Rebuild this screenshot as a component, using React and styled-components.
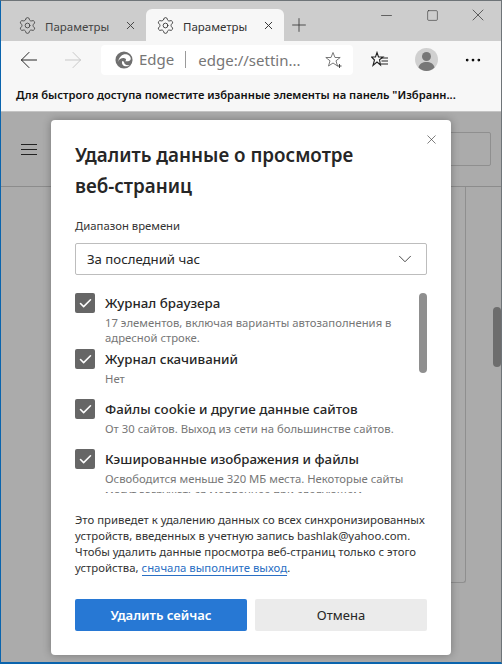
import styled, { createGlobalStyle } from 'styled-components';
import { Settings, X, Plus, ArrowLeft, ArrowRight, Minus, Square, ChevronDown, Check, MoreHorizontal } from 'lucide-react';

const Global = createGlobalStyle`
  html, body { margin: 0; padding: 0; }
  body { font-family: "Noto Sans", "Open Sans", sans-serif; background: #aaa; }
  * { box-sizing: border-box; }
`;

const Win = styled.div`
  position: relative;
  width: 502px;
  height: 664px;
  overflow: hidden;
  display: flex;
  flex-direction: column;
  border-top: 1px solid #6e7478;
  border-left: 1px solid #0a64ad;
  border-right: 1px solid #6e7478;
  border-bottom: 2px solid #0a64ad;
`;

const TabStrip = styled.div`
  height: 40px;
  flex: none;
  background: #cdcdcd;
  display: flex;
  align-items: flex-end;
  padding-left: 7px;
`;

const Tab = styled.div`
  width: 138px;
  height: 32px;
  display: flex;
  align-items: center;
  padding: 0 9px 0 10px;
  gap: 8px;
  font-size: 11.5px;
  color: ${({ $active }) => ($active ? '#333' : '#444')};
  background: ${({ $active }) => ($active ? '#f7f7f7' : 'transparent')};
  border-radius: 6px 6px 0 0;
  svg { flex: none; }
`;

const TabLabel = styled.span`
  flex: 1;
  white-space: nowrap;
  position: relative;
  top: 1px;
`;

const NewTab = styled.div`
  width: 30px;
  height: 32px;
  display: flex;
  align-items: center;
  justify-content: center;
  color: #333;
`;

const WinControls = styled.div`
  margin-left: auto;
  align-self: flex-start;
  display: flex;
  color: #222;
`;

const WinBtn = styled.div`
  width: 46px;
  height: 28px;
  display: flex;
  align-items: center;
  justify-content: center;
`;

const Toolbar = styled.div`
  height: 37px;
  flex: none;
  background: #f7f7f7;
  display: flex;
  align-items: center;
  padding-left: 6px;
`;

const NavBtn = styled.div`
  width: 44px;
  display: flex;
  justify-content: center;
  color: ${({ $off }) => ($off ? '#c6c6c6' : '#222')};
`;

const Address = styled.div`
  margin-left: 6px;
  width: 252px;
  height: 30px;
  background: #fff;
  border-radius: 4px;
  display: flex;
  align-items: center;
  padding: 0 10px 0 14px;
  font-size: 15px;
  color: #767676;
`;

const EdgeName = styled.span`
  margin-left: 6px;
  padding-right: 11px;
  border-right: 1px solid #9a9a9a;
  line-height: 17px;
`;

const Url = styled.span`
  flex: 1;
  margin-left: 12px;
  white-space: nowrap;
`;

const ToolIcons = styled.div`
  display: flex;
  flex: 1;
  align-items: center;
  justify-content: space-between;
  padding: 0 18px 0 18px;
`;

const FavBar = styled.div`
  height: 34px;
  flex: none;
  background: #f7f7f7;
  display: flex;
  align-items: center;
  padding-left: 15px;
  font-size: 11.2px;
  font-weight: 600;
  color: #111;
  white-space: nowrap;
  border-bottom: 1px solid #c4c4c4;
`;

const Page = styled.div`
  flex: 1;
  background: #ababab;
  display: flex;
  flex-direction: column;
`;

const PageHead = styled.div`
  height: 75px;
  flex: none;
  border-bottom: 1px solid #8c8c8c;
  display: flex;
  align-items: center;
  justify-content: space-between;
  padding: 0 10px 0 20px;
  color: #222;
`;

const SearchBox = styled.div`
  width: 120px;
  height: 34px;
  border: 1px solid #8f8f8f;
  border-radius: 2px;
`;

const PageBody = styled.div`
  flex: 1;
  display: flex;
  justify-content: flex-end;
`;

const PageCard = styled.div`
  width: 300px;
  height: 396px;
  border-right: 1px solid #8f8f8f;
  border-bottom: 1px solid #8f8f8f;
  border-radius: 0 0 3px 0;
  margin-right: 35px;
`;

const PageThumb = styled.div`
  position: absolute;
  right: 0;
  top: 306px;
  width: 8px;
  height: 60px;
  border-radius: 4px;
  background: #6d6d6d;
`;

const Modal = styled.div`
  position: absolute;
  left: 50px;
  top: 119px;
  width: 400px;
  height: 535px;
  background: #fff;
  border-radius: 4px;
  box-shadow: 0 0 8px rgba(0, 0, 0, 0.3);
  padding: 20px 24px 24px;
  display: flex;
  flex-direction: column;
`;

const CloseBtn = styled.div`
  position: absolute;
  top: 12px;
  right: 12px;
  color: #333;
  display: flex;
`;

const Title = styled.h2`
  margin: 0;
  font-size: 18.8px;
  line-height: 31px;
  font-weight: 600;
  color: #262626;
  width: 310px;
`;

const FieldLabel = styled.div`
  margin-top: 16px;
  font-size: 11.3px;
  line-height: 16px;
  color: #333;
`;

const Select = styled.div`
  margin-top: 9px;
  height: 32px;
  flex: none;
  border: 1px solid #bdbdbd;
  border-radius: 2px;
  display: flex;
  align-items: center;
  justify-content: space-between;
  padding: 0 10px 0 11px;
  font-size: 13.2px;
  color: #262626;
`;

const ListWrap = styled.div`
  margin-top: 18px;
  height: 200px;
  flex: none;
  overflow: hidden;
  position: relative;
`;

const Thumb = styled.div`
  position: absolute;
  right: 0;
  top: 0;
  width: 8px;
  height: 80px;
  border-radius: 4px;
  background: #8f8f8f;
`;

const Item = styled.div`
  display: flex;
  gap: 10px;
  height: ${({ $h }) => $h}px;
`;

const Box = styled.div`
  width: 20px;
  height: 20px;
  flex: none;
  background: #666;
  border-radius: 2px;
  color: #fff;
  display: flex;
  align-items: center;
  justify-content: center;
`;

const ItemText = styled.div`
  width: 300px;
`;

const ItemTitle = styled.div`
  font-size: 13.3px;
  line-height: 20px;
  font-weight: 500;
  color: #262626;
`;

const ItemDesc = styled.div`
  margin-top: 2px;
  font-size: 11.3px;
  line-height: 15px;
  color: #767676;
`;

const Note = styled.p`
  margin: 19px 0 0;
  font-size: 11.35px;
  line-height: 16px;
  color: #333;
`;

const NoteLink = styled.span`
  color: #2a6fc4;
  border-bottom: 1px solid #2a6fc4;
`;

const Actions = styled.div`
  margin-top: auto;
  display: flex;
  gap: 8px;
`;

const Button = styled.div`
  flex: 1;
  height: 32px;
  border-radius: 2px;
  display: flex;
  align-items: center;
  justify-content: center;
  font-size: 13px;
  font-weight: ${({ $primary }) => ($primary ? 600 : 400)};
  color: ${({ $primary }) => ($primary ? '#fff' : '#262626')};
  background: ${({ $primary }) => ($primary ? '#2778d4' : '#ebebeb')};
`;

const EdgeLogo = () => (
  <svg width="18" height="18" viewBox="0 0 20 20">
    <circle cx="10" cy="10" r="9.5" fill="#6f6f6f" />
    <path d="M3 12.500c1.500-3.500 4.500-5 7.500-4.500 1 .2 1.800.9 1.800 1.800 0 .7-.5 1.200-1 1.500 2.800.6 6.200-.3 6.200-2.800 0-3-3-5-6-5-3.500 0-6.800 2.800-8.500 9z" fill="#fff" />
    <path d="M8 11c-1 3 1 6 4.500 6 1.500 0 3-.5 4-1.500-3.500 1-6.500-.7-6.500-3.500z" fill="#fff" />
  </svg>
);

const StarPlus = () => (
  <svg width="18" height="18" viewBox="0 0 18 18" fill="none" stroke="#6a6a6a" strokeWidth="0.9">
    <path d="M8 1.500l2 5h5.200l-4.200 3.300 1.500 5.200L8 12l-4.500 3 1.500-5.200L.8 6.500H6z" />
    <path d="M12.500 15h4M14.500 13v4" stroke="#333" />
  </svg>
);

const FavList = () => (
  <svg width="18" height="18" viewBox="0 0 18 18" fill="none" stroke="#222" strokeWidth="1.100">
    <path d="M6 1.500l1.500 4.500H12L8.500 8.800 9.500 14 6 11l-4 3.500 1.500-5.500L.5 6H4.500z" />
    <path d="M10 7h7M10.500 10h6.500M10 13h7" />
  </svg>
);

const Avatar = () => (
  <svg width="23" height="23" viewBox="0 0 23 23">
    <circle cx="11.500" cy="11.500" r="11.500" fill="#d0d0d0" />
    <circle cx="11.500" cy="8.500" r="4.500" fill="#777" />
    <path d="M3.500 19.500c1-4 4-5.500 8-5.500s7 1.500 8 5.500c-2 2-5 3.500-8 3.500s-6-1.500-8-3.500z" fill="#777" />
  </svg>
);

const Hamburger = () => (
  <svg width="16" height="11" viewBox="0 0 16 11" stroke="#222" strokeWidth="1">
    <path d="M0 .5h16M0 5.500h16M0 10.500h16" />
  </svg>
);

const items = [
  { h: 56, title: 'Журнал браузера', desc: '17 элементов, включая варианты автозаполнения в адресной строке.' },
  { h: 50, title: 'Журнал скачиваний', desc: 'Нет' },
  { h: 50, title: 'Файлы cookie и другие данные сайтов', desc: 'От 30 сайтов. Выход из сети на большинстве сайтов.' },
  { h: 60, title: 'Кэшированные изображения и файлы', desc: 'Освободится меньше 320 МБ места. Некоторые сайты могут загружаться медленнее при следующем посещении.' },
];

export default function App() {
  return (
    <>
      <Global />
      <Win>
        <TabStrip>
          <Tab>
            <Settings size={19} strokeWidth={1.100} />
            <TabLabel>Параметры</TabLabel>
            <X size={13} strokeWidth={1.800} />
          </Tab>
          <Tab $active>
            <Settings size={19} strokeWidth={1.100} />
            <TabLabel>Параметры</TabLabel>
            <X size={13} strokeWidth={1.800} />
          </Tab>
          <NewTab><Plus size={22} strokeWidth={0.9} /></NewTab>
          <WinControls>
            <WinBtn><Minus size={17} strokeWidth={0.9} /></WinBtn>
            <WinBtn><Square size={13} strokeWidth={1} /></WinBtn>
            <WinBtn><X size={20} strokeWidth={0.8} /></WinBtn>
          </WinControls>
        </TabStrip>
        <Toolbar>
          <NavBtn><ArrowLeft size={26} strokeWidth={0.9} /></NavBtn>
          <NavBtn $off><ArrowRight size={26} strokeWidth={0.9} /></NavBtn>
          <Address>
            <EdgeLogo />
            <EdgeName>Edge</EdgeName>
            <Url>edge://settin...</Url>
            <StarPlus />
          </Address>
          <ToolIcons>
            <FavList />
            <Avatar />
            <MoreHorizontal size={20} strokeWidth={1.300} />
          </ToolIcons>
        </Toolbar>
        <FavBar>Для быстрого доступа поместите избранные элементы на панель "Избранн...</FavBar>
        <Page>
          <PageHead>
            <Hamburger />
            <SearchBox />
          </PageHead>
          <PageBody><PageCard /></PageBody>
        </Page>
        <PageThumb />
        <Modal>
          <CloseBtn><X size={15} strokeWidth={1} /></CloseBtn>
          <Title>Удалить данные о просмотре веб-страниц</Title>
          <FieldLabel>Диапазон времени</FieldLabel>
          <Select>
            За последний час
            <ChevronDown size={22} strokeWidth={0.9} />
          </Select>
          <ListWrap>
            <Thumb />
            {items.map((it) => (
              <Item key={it.title} $h={it.h}>
                <Box><Check size={15} strokeWidth={2.500} /></Box>
                <ItemText>
                  <ItemTitle>{it.title}</ItemTitle>
                  <ItemDesc>{it.desc}</ItemDesc>
                </ItemText>
              </Item>
            ))}
          </ListWrap>
          <Note>
            Это приведет к удалению данных со всех синхронизированных устройств, введенных в учетную запись bashlak@yahoo.com. Чтобы удалить данные просмотра веб-страниц только с этого устройства, <NoteLink>сначала выполните выход</NoteLink>.
          </Note>
          <Actions>
            <Button $primary>Удалить сейчас</Button>
            <Button>Отмена</Button>
          </Actions>
        </Modal>
      </Win>
    </>
  );
}
